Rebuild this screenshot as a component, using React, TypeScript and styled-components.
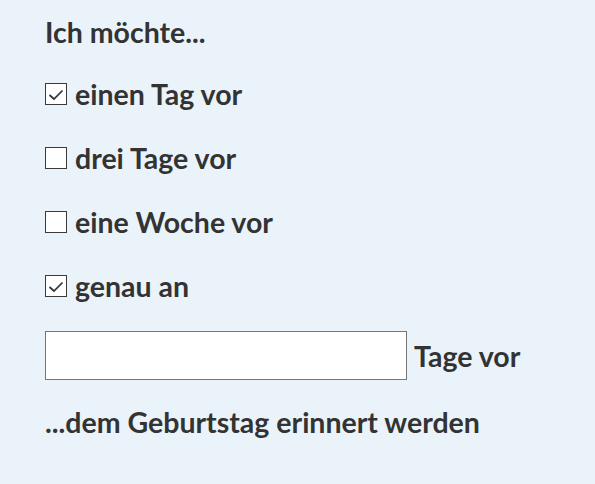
import styled, { createGlobalStyle } from 'styled-components';

const GlobalStyle = createGlobalStyle`
  html, body {
    margin: 0;
    padding: 0;
    background: #eaf3fa;
  }
  body {
    font-family: Lato, "Liberation Sans", sans-serif;
    color: #333333;
  }
`;

const options = [
  { label: 'einen Tag vor', checked: true },
  { label: 'drei Tage vor', checked: false },
  { label: 'eine Woche vor', checked: false },
  { label: 'genau an', checked: true },
];

const Checkmark = () => (
  <svg width="16" height="13" viewBox="0 0 16 13">
    <path d="M1.5 7 L6 11 L14.5 2.5" fill="none" stroke="#333" strokeWidth="1.7" />
  </svg>
);

const App = () => (
  <>
    <GlobalStyle />
    <Form>
      <Heading>Ich möchte...</Heading>
      {options.map((o) => (
        <OptionRow key={o.label}>
          <Box>{o.checked && <Checkmark />}</Box>
          <span>{o.label}</span>
        </OptionRow>
      ))}
      <InputRow>
        <DaysInput type="text" />
        <span>Tage vor</span>
      </InputRow>
      <Heading>...dem Geburtstag erinnert werden</Heading>
    </Form>
  </>
);

export default App;

const Form = styled.div`
  display: flex;
  flex-direction: column;
  padding: 15px 0 0 45px;
  font-size: 28.5px;
  font-weight: 700;
  line-height: 34px;
`;

const Heading = styled.div`
  height: 34px;
  margin-bottom: 28px;
`;

const OptionRow = styled.label`
  display: flex;
  align-items: center;
  gap: 8px;
  height: 34px;
  margin-bottom: 30px;
`;

const Box = styled.span`
  width: 20px;
  height: 20px;
  border: 1px solid #3a3a3a;
  background: #fff;
  display: flex;
  align-items: center;
  justify-content: center;
  flex-shrink: 0;
`;

const InputRow = styled.div`
  display: flex;
  align-items: center;
  gap: 7px;
  margin-top: -2px;
  margin-bottom: 25px;
`;

const DaysInput = styled.input`
  box-sizing: border-box;
  width: 362px;
  height: 49px;
  border: 1px solid #767676;
  background: #fff;
  margin: 0;
  padding: 0 8px;
  font: inherit;
`;
